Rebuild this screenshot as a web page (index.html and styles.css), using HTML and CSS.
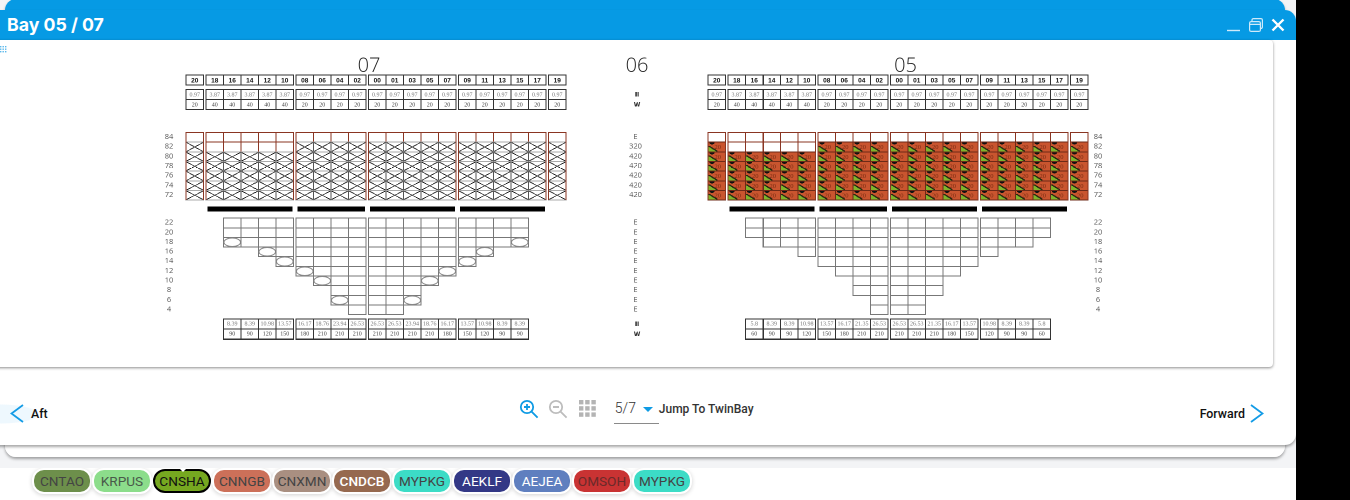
FILE: index.html
```html
<!DOCTYPE html>
<html lang="en">
<head>
<meta charset="utf-8">
<title>Bay 05 / 07</title>
<link rel="stylesheet" href="styles.css">
</head>
<body>
<div class="desk">
  <div class="window window-back"></div>
  <div class="window window-front">
    <header class="titlebar">
      <h1 class="title">Bay 05 / 07</h1>
      <div class="controls">
        <svg class="ctl" width="14" height="14" viewBox="0 0 14 14"><path d="M0 12.5H13" stroke="#cfeafa" stroke-width="1.4"/></svg>
        <svg class="ctl" width="14" height="14" viewBox="0 0 14 14" fill="none" stroke="#cfeafa" stroke-width="1.2"><rect x=".6" y="3.6" width="10.8" height="9.8" rx="1.5"/><path d="M3 3.4V2a1.4 1.4 0 0 1 1.4-1.4h7.6A1.4 1.4 0 0 1 13.4 2v7a1.4 1.4 0 0 1-1.4 1.4h-.6M.8 6.3H11.2"/></svg>
        <svg class="ctl" width="14" height="14" viewBox="0 0 14 14"><path d="M1.5 1.5L12.5 12.5M12.5 1.5L1.5 12.5" stroke="#fff" stroke-width="2.4"/></svg>
      </div>
    </header>
    <main class="sheet">
      <svg class="handle" width="7" height="7" viewBox="0 0 7 7" fill="#5ab8ec"><rect x="0" y="0" width="1.4" height="1.4"/><rect x="2.5" y="0" width="1.4" height="1.4"/><rect x="5" y="0" width="1.4" height="1.4"/><rect x="0" y="2.5" width="1.4" height="1.4"/><rect x="2.5" y="2.5" width="1.4" height="1.4"/><rect x="5" y="2.5" width="1.4" height="1.4"/><rect x="0" y="5" width="1.4" height="1.4"/><rect x="2.5" y="5" width="1.4" height="1.4"/><rect x="5" y="5" width="1.4" height="1.4"/></svg>
      <div class="stage" id="stage"></div>
    </main>
    <nav class="pager">
      <div class="step step-aft">
        <svg width="14" height="19" viewBox="0 0 14 19" fill="none" stroke="#149ce6" stroke-width="1.8"><path d="M13 1L1.5 9.5L13 18"/></svg>
        <span>Aft</span>
      </div>
      <div class="tools">
        <svg width="20" height="20" viewBox="0 0 20 20" fill="none" stroke="#0f9be4" stroke-width="1.8"><circle cx="8" cy="8" r="6.2"/><path d="M12.6 12.6L18.6 18.6M5 8H11M8 5V11"/></svg>
        <svg width="20" height="20" viewBox="0 0 20 20" fill="none" stroke="#bdbdbd" stroke-width="1.8"><circle cx="8" cy="8" r="6.2"/><path d="M12.6 12.6L18.6 18.6M5 8H11"/></svg>
        <svg width="17" height="17" viewBox="0 0 17 17" fill="#b4b4b4"><rect x="0" y="0" width="4.4" height="4.4"/><rect x="6.2" y="0" width="4.4" height="4.4"/><rect x="12.4" y="0" width="4.4" height="4.4"/><rect x="0" y="6.2" width="4.4" height="4.4"/><rect x="6.2" y="6.2" width="4.4" height="4.4"/><rect x="12.4" y="6.2" width="4.4" height="4.4"/><rect x="0" y="12.4" width="4.4" height="4.4"/><rect x="6.2" y="12.4" width="4.4" height="4.4"/><rect x="12.4" y="12.4" width="4.4" height="4.4"/></svg>
        <div class="picker"><span class="picker-value">5/7</span><span class="caret"></span></div>
        <span class="jump">Jump To TwinBay</span>
      </div>
      <div class="step step-fwd">
        <span>Forward</span>
        <svg width="14" height="19" viewBox="0 0 14 19" fill="none" stroke="#149ce6" stroke-width="1.8"><path d="M1 1L12.5 9.5L1 18"/></svg>
      </div>
    </nav>
  </div>
</div>
<footer class="ports">
  <span class="chip c-tao">CNTAO</span>
  <span class="chip c-krp">KRPUS</span>
  <span class="chip c-sha">CNSHA</span>
  <span class="chip c-ngb">CNNGB</span>
  <span class="chip c-xmn">CNXMN</span>
  <span class="chip c-dcb">CNDCB</span>
  <span class="chip c-myp">MYPKG</span>
  <span class="chip c-kl">AEKLF</span>
  <span class="chip c-je">AEJEA</span>
  <span class="chip c-om">OMSOH</span>
  <span class="chip c-myp">MYPKG</span>
</footer>
<script src="app.js"></script>
</body>
</html>
```

FILE: styles.css
```css
* { box-sizing: border-box; }
html { background: #000; }
body { margin: 0; width: 1296px; height: 500px; background: #fff; overflow: hidden; font-family: "Roboto", sans-serif; }

.desk { position: relative; height: 468px; background: #f3f4f6; overflow: hidden; }
.window { position: absolute; border-radius: 11px; background: #fff; box-shadow: 0 2px 3px rgba(0,0,0,.35); }
.window-back { left: 5px; right: 11px; top: -1px; height: 458px; background: linear-gradient(#069ae4 40px, #fff 40px); }
.window-front { left: -12px; right: 0; top: 10px; height: 435px; display: flex; flex-direction: column; }

.titlebar { height: 30px; flex: none; background: #069ae4; display: flex; align-items: center; justify-content: space-between; padding: 0 11px 2px 19px; border-radius: 11px 11px 0 0; }
.title { margin: 0; font: 700 17.7px "Inter", sans-serif; color: #fff; }
.controls { display: flex; gap: 8px; align-items: center; margin-bottom: -2px; }
.ctl { display: block; }

.sheet { position: relative; height: 327px; flex: none; margin-right: 23px; overflow: hidden; background: #fff; border-radius: 0 4px 4px 0; box-shadow: 0 1px 3px rgba(0,0,0,.45); }
.handle { position: absolute; left: 12px; top: 6px; }
.stage { width: 2592px; margin-left: 12px; padding: 30px 0 0 318px; display: flex; align-items: flex-start; transform: scale(.5); transform-origin: 0 0; will-change: transform; }

.rail { width: 40px; margin-right: 14px; flex: none; }
.rail-right { margin-right: 0; }
.middle { width: 284px; flex: none; }
.bay { width: 760px; flex: none; }

.r-title { height: 38px; margin-bottom: 2px; display: flex; align-items: center; justify-content: center; font: 300 40px/38px "Open Sans", sans-serif; color: #222; }
.title-07 { padding-right: 28px; }
.title-05 { padding-left: 30px; }
.r-head { height: 20px; }
.r-vals { height: 40px; margin-top: 9px; }
.r-stow { height: 135.3px; margin-top: 46px; }
.r-bars { height: 10px; margin-top: 13px; }
.r-below { height: 193px; margin-top: 13px; }
.r-foot { height: 40px; margin-top: 8.4px; }

.groups { display: flex; gap: 5px; }
.inset { padding-left: 75px; }
.grid2 { display: grid; grid-auto-rows: 20px; grid-auto-flow: row; }
.g1 { grid-template-columns: repeat(1, 35px); }
.g4 { grid-template-columns: repeat(4, 35px); }
.g5 { grid-template-columns: repeat(5, 35px); }

.cell { margin: -1px; border: 2px solid #333; background: #fff; display: flex; align-items: center; justify-content: center; white-space: nowrap; overflow: hidden; }
.cell-head { font: 700 13px "Liberation Sans", sans-serif; color: #111; }
.cell-val { font: 12px "Liberation Serif", serif; color: #777; }
.cell-val2 { font: 12px "Liberation Serif", serif; color: #444; }

.stow-group { position: relative; display: grid; grid-auto-rows: 19.33px; }
.stow-group::after { content: ""; position: absolute; inset: 0 -1px; border-left: 2px solid #8a3522; border-right: 2px solid #8a3522; pointer-events: none; }
.slot { margin: -1px; border: 2px solid #8a3522; background: #fff; }
.slot-x { border-style: solid; border-width: 2px; border-color: #aaa #555; background:
  linear-gradient(to top right, transparent calc(50% - .8px), #222 calc(50% - .8px), #222 calc(50% + .8px), transparent calc(50% + .8px)),
  linear-gradient(to bottom right, transparent calc(50% - .8px), #222 calc(50% - .8px), #222 calc(50% + .8px), transparent calc(50% + .8px)),
  #fff; }
.slot-full { border-color: #6d2a18; display: flex; align-items: center; justify-content: flex-start; padding-left: 12px; font: 13px/1 "Liberation Serif", serif; color: #7a2c14; overflow: hidden; background:
  radial-gradient(ellipse 5px 4px at 7px 0, #111 98%, transparent 100%),
  linear-gradient(to top right, #7fb52c 0 44%, #2a2a12 44% 58%, transparent 58%) left bottom / 18px 11px no-repeat,
  #c9552f; }

.bars { display: flex; gap: 10px; padding-left: 43px; height: 100%; }
.bar { background: #000; }
.bar-l { width: 170px; }
.bar-s { width: 135px; }

.deck { display: flex; gap: 5px; padding-left: 75px; }
.deck-group { display: flex; }
.deck-col { width: 35px; display: grid; grid-auto-rows: 19.3px; align-content: start; }
.hold { position: relative; margin: -1px; border: 2px solid #777; background: #fff; }
.hold-oval::after { content: ""; position: absolute; inset: -1px; border: 2px solid #888; border-radius: 50%; background: #fff; }

.labels { display: grid; justify-items: center; color: #555; font: 15px "Open Sans", sans-serif; }
.labels-7 { grid-auto-rows: 19.33px; }
.labels-10 { grid-auto-rows: 19.3px; }
.label { line-height: 15px; }
.shift { padding-right: 6px; }
.mark { display: grid; grid-auto-rows: 20px; justify-items: center; font: 700 12px/20px "DejaVu Sans", sans-serif; color: #333; height: 40px; }

.pager { flex: 1; display: flex; align-items: center; padding: 5px 32px 0 10px; justify-content: space-between; position: relative; }
.step { display: flex; align-items: center; gap: 8px; font: 500 12.4px "Roboto", sans-serif; color: #111; margin-top: 10px; }
.step-aft { padding-left: 22px; margin-left: -10px; height: 30px; gap: 7px; background: radial-gradient(ellipse 40px 10px at 12px 50%, #eef8fe 90%, transparent 100%); }
.step-fwd { gap: 5px; }
.tools { display: flex; align-items: center; margin-left: 25px; }
.tools svg { margin-right: 9px; }
.tools svg:nth-child(3) { margin-left: 2px; margin-right: 18px; }
.picker { width: 45px; height: 30px; border-bottom: 1px solid #8a8a8a; display: flex; align-items: center; gap: 7px; padding: 0 0 0 1px; }
.picker-value { font: 300 14px "Roboto", sans-serif; color: #333; }
.caret { width: 0; height: 0; border-left: 5px solid transparent; border-right: 5px solid transparent; border-top: 5px solid #0f9be4; margin-top: 3px; }
.jump { font: 500 12px "Roboto", sans-serif; color: #333; padding-left: 0; }

.ports { height: 32px; display: flex; gap: 4px; align-items: flex-start; padding: 2px 0 0 34px; }
.chip { width: 56px; height: 22px; flex: none; border-radius: 10px; display: flex; align-items: center; justify-content: center; font: 400 13.6px "Roboto", sans-serif; color: #444; box-shadow: 0 0 0 2px #fff, 0 1px 4px 2px rgba(0,0,0,.18); }
.c-tao { background: #6d8f4b; }
.c-krp { background: #8cdd8b; color: #4a5a4a; }
.c-sha { position: relative; background: #76a820; color: #111; margin: -1px; width: 58px; height: 24px; border: 2px solid #000; box-shadow: 0 0 0 1px #fff; border-radius: 12px; }
.c-sha::before { content: ""; position: absolute; left: 24px; top: -3px; border-left: 4px solid transparent; border-right: 4px solid transparent; border-top: 4px solid #fff; }
.c-ngb { background: #cc7059; }
.c-xmn { background: #a98f81; }
.c-dcb { background: #96694f; color: #fff; font-weight: 500; }
.c-myp { background: #3cdcc6; }
.c-kl { background: #333886; color: #fff; }
.c-je { background: #5f7fbf; color: #fff; }
.c-om { background: #c93333; color: #6b2a2a; }
```

FILE: app.js
```javascript
(function () {
  var HEADS = [['20'], ['18', '16', '14', '12', '10'], ['08', '06', '04', '02'], ['00', '01', '03', '05', '07'], ['09', '11', '13', '15', '17'], ['19']];
  var TOP_EMPTY = [1, 2, 1, 1, 1, 1];
  var BAYS = {
    '07': {
      stowed: false,
      deck: [
        [[3, 3], [3, 0], [4, 4], [5, 5]],
        [[6, 6], [7, 7], [9, 9], [10, 0]],
        [[10, 0], [10, 0], [9, 9], [7, 7], [6, 6]],
        [[5, 5], [4, 4], [3, 0], [3, 3]]
      ],
      weights: ['8.39', '8.39', '10.98', '13.57', '16.17', '18.76', '23.94', '26.53', '26.53', '26.53', '23.94', '18.76', '16.17', '13.57', '10.98', '8.39', '8.39'],
      caps: [90, 90, 120, 150, 180, 210, 210, 210, 210, 210, 210, 210, 180, 150, 120, 90, 90]
    },
    '05': {
      stowed: true,
      deck: [
        [[2, 0], [3, 0], [3, 0], [4, 0]],
        [[5, 0], [6, 0], [8, 0], [10, 0]],
        [[10, 0], [10, 0], [8, 0], [6, 0], [5, 0]],
        [[4, 0], [3, 0], [3, 0], [2, 0]]
      ],
      weights: ['5.8', '8.39', '8.39', '10.98', '13.57', '16.17', '21.35', '26.53', '26.53', '26.53', '21.35', '16.17', '13.57', '10.98', '8.39', '8.39', '5.8'],
      caps: [60, 90, 90, 120, 150, 180, 210, 210, 210, 210, 210, 180, 150, 120, 90, 90, 60]
    }
  };
  var UPPER = ['84', '82', '80', '78', '76', '74', '72'];
  var LOWER = ['22', '20', '18', '16', '14', '12', '10', '8', '6', '4'];

  function el(cls, text) {
    var d = document.createElement('div');
    d.className = cls;
    if (text !== undefined) d.textContent = text;
    return d;
  }
  function add(parent) {
    for (var i = 1; i < arguments.length; i++) parent.appendChild(arguments[i]);
    return parent;
  }
  function spacer(cls) { return el(cls); }

  function headRow() {
    var row = el('r-head groups');
    HEADS.forEach(function (g) {
      var grid = el('grid2 g' + g.length);
      g.forEach(function (h) { grid.appendChild(el('cell cell-head', h)); });
      row.appendChild(grid);
    });
    return row;
  }
  function valsRow() {
    var row = el('r-vals groups');
    HEADS.forEach(function (g, idx) {
      var grid = el('grid2 g' + g.length);
      var big = idx === 1;
      g.forEach(function () { grid.appendChild(el('cell cell-val', big ? '3.87' : '0.97')); });
      g.forEach(function () { grid.appendChild(el('cell cell-val2', big ? '40' : '20')); });
      row.appendChild(grid);
    });
    return row;
  }
  function stowRow(stowed) {
    var row = el('r-stow groups');
    HEADS.forEach(function (g, idx) {
      var grid = el('stow-group g' + g.length);
      for (var r = 0; r < 7; r++) {
        g.forEach(function () {
          if (r < TOP_EMPTY[idx]) grid.appendChild(el('slot'));
          else if (stowed) grid.appendChild(el('slot slot-full', '20'));
          else grid.appendChild(el('slot slot-x'));
        });
      }
      row.appendChild(grid);
    });
    return row;
  }
  function barsRow() {
    var row = el('r-bars');
    var bars = el('bars');
    ['l', 's', 'l', 'l'].forEach(function (k) { bars.appendChild(el('bar bar-' + k)); });
    return add(row, bars);
  }
  function belowRow(deck) {
    var row = el('r-below deck');
    deck.forEach(function (g) {
      var grp = el('deck-group');
      g.forEach(function (c) {
        var col = el('deck-col');
        for (var i = 1; i <= c[0]; i++) col.appendChild(el(i === c[1] ? 'hold hold-oval' : 'hold'));
        grp.appendChild(col);
      });
      row.appendChild(grp);
    });
    return row;
  }
  function footRow(b) {
    var row = el('r-foot groups inset');
    var n = 0;
    [4, 4, 5, 4].forEach(function (len) {
      var grid = el('grid2 g' + len);
      for (var i = 0; i < len; i++) grid.appendChild(el('cell cell-val', b.weights[n + i]));
      for (var j = 0; j < len; j++) grid.appendChild(el('cell cell-val2', b.caps[n + j]));
      n += len;
      row.appendChild(grid);
    });
    return row;
  }
  function bay(name) {
    var b = BAYS[name];
    return add(el('bay'), el('r-title title-' + name, name), headRow(), valsRow(), stowRow(b.stowed), barsRow(), belowRow(b.deck), footRow(b));
  }
  function labels(list, cls) {
    var box = el(cls);
    list.forEach(function (t) { box.appendChild(el('label', t)); });
    return box;
  }
  function rail(extra) {
    return add(el('rail' + extra), spacer('r-title'), spacer('r-head'), spacer('r-vals'),
      labels(UPPER, 'r-stow labels labels-7'), spacer('r-bars'), labels(LOWER, 'r-below labels labels-10'));
  }
  function marks(cls) {
    return add(el(cls), add(el('mark'), el('', 'II'), el('', 'W')));
  }
  function middle() {
    var e = [];
    for (var i = 0; i < 10; i++) e.push('E');
    return add(el('middle'), el('r-title', '06'), spacer('r-head'), marks('r-vals'),
      labels(['E', '320', '420', '420', '420', '420', '420'], 'r-stow labels labels-7 shift'),
      spacer('r-bars'), labels(e, 'r-below labels labels-10 shift'), marks('r-foot'));
  }
  add(document.getElementById('stage'), rail(''), bay('07'), middle(), bay('05'), rail(' rail-right'));
})();
```
